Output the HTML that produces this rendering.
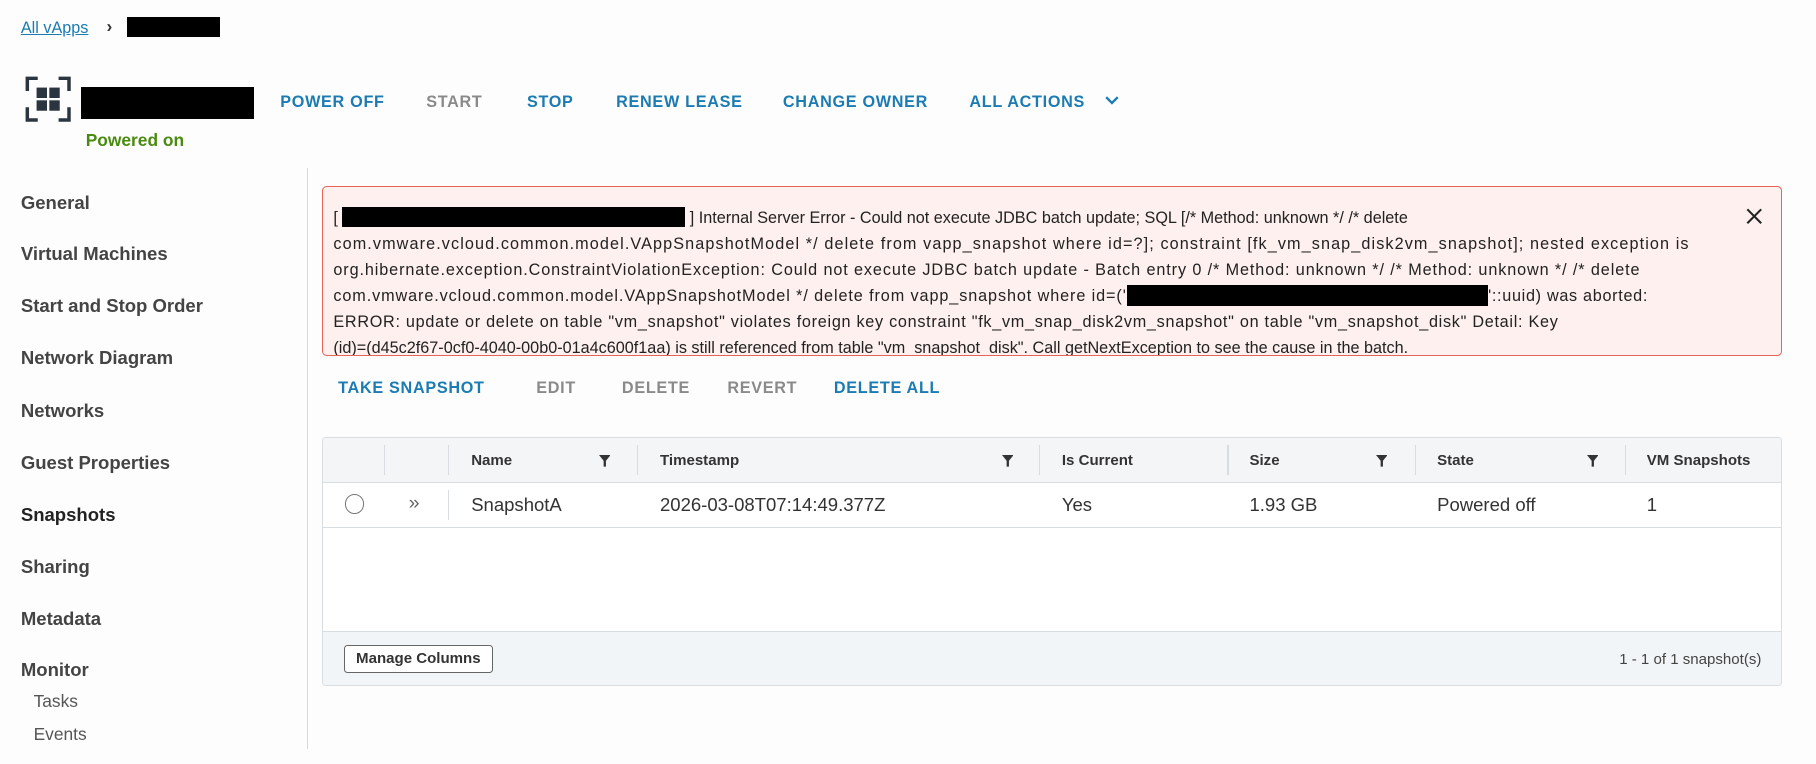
<!DOCTYPE html>
<html><head><meta charset="utf-8"><style>
html,body{margin:0;padding:0;width:1816px;height:764px;overflow:hidden;background:#fff;}
#w{zoom:1.15816;width:1568px;height:660px;position:relative;font-family:"Liberation Sans",sans-serif;color:#333;background:#fdfdfd;}
.a{position:absolute;white-space:nowrap;}
.act{font-size:14px;font-weight:bold;letter-spacing:.6px;color:#1b7bb2;top:80px;}
.g{color:#8a8a8a;}
.nav{left:18px;font-size:16px;font-weight:bold;color:#444;}
.sub{font-size:15px;color:#555;left:29px;}
.err{left:278px;top:161px;width:1259px;height:145px;background:#fdf0ee;border:1px solid #e66457;border-radius:4px;overflow:hidden;}
.err p{margin:0;position:absolute;left:9px;top:15px;font-size:14px;line-height:22.5px;color:#222;white-space:nowrap;}
.blk{display:inline-block;background:#000;height:18px;vertical-align:-4px;}
.b2{font-size:14px;font-weight:bold;letter-spacing:.6px;top:327px;}
.tbl{left:278px;top:377px;width:1259px;height:214px;border:1px solid #d7dde1;border-radius:3px;background:#fff;overflow:hidden;}
.hd{position:absolute;left:0;top:0;width:100%;height:38px;background:#f3f5f7;border-bottom:1px solid #d7dde1;}
.th{top:12px;font-size:13px;font-weight:bold;color:#333;}
.sep{position:absolute;width:1px;background:#d7dde1;}
.td{top:49px;font-size:16px;color:#333;}
.ft{position:absolute;left:0;top:167px;width:100%;height:47px;background:#f2f5f7;border-top:1px solid #d7dde1;}
</style></head><body><div id="w">
<div class="a" style="left:18px;top:16px;font-size:14px;color:#1b7bb2;text-decoration:underline;">All vApps</div>
<div class="a" style="left:92px;top:14px;font-size:15px;color:#333;font-weight:bold;">›</div>
<div class="a" style="left:110px;top:15px;width:80px;height:17px;background:#000;"></div>
<svg class="a" style="left:22px;top:66px" width="40" height="40" viewBox="0 0 40 40" fill="none" stroke="#2b3540" stroke-width="3">
<path d="M2 13V2h9M29 2h9v11M38 27v11h-9M11 38H2V27"/>
<g fill="#2b3540" stroke="none"><rect x="10" y="10" width="9" height="9"/><rect x="21" y="10" width="9" height="9"/><rect x="10" y="21" width="9" height="9"/><rect x="21" y="21" width="9" height="9"/></g></svg>
<div class="a" style="left:70px;top:75px;width:149px;height:28px;background:#000;"></div>
<div class="a act" style="left:242px">POWER OFF</div>
<div class="a act g" style="left:368px">START</div>
<div class="a act" style="left:455px">STOP</div>
<div class="a act" style="left:532px">RENEW LEASE</div>
<div class="a act" style="left:676px">CHANGE OWNER</div>
<div class="a act" style="left:837px">ALL ACTIONS</div>
<svg class="a" style="left:954px;top:83px" width="12" height="8" viewBox="0 0 12 8"><path d="M1 1l5 5 5-5" stroke="#1b7bb2" stroke-width="2" fill="none"/></svg>
<div class="a" style="left:74px;top:112px;font-size:15px;font-weight:bold;color:#4a8a10;">Powered on</div>
<div class="a" style="left:265px;top:145px;width:1px;height:502px;background:#d8d8d8;"></div>
<div class="a nav" style="top:166px">General</div>
<div class="a nav" style="top:210px">Virtual Machines</div>
<div class="a nav" style="top:255px">Start and Stop Order</div>
<div class="a nav" style="top:300px">Network Diagram</div>
<div class="a nav" style="top:345px">Networks</div>
<div class="a nav" style="top:390px">Guest Properties</div>
<div class="a nav" style="top:435px;color:#222">Snapshots</div>
<div class="a nav" style="top:480px">Sharing</div>
<div class="a nav" style="top:525px">Metadata</div>
<div class="a nav" style="top:569px">Monitor</div>
<div class="a sub" style="top:597px">Tasks</div>
<div class="a sub" style="top:625px">Events</div>
<div class="a err"><p>[ <span class="blk" style="width:296px"></span> ] Internal Server Error - Could not execute JDBC batch update; SQL [/* Method: unknown */ /* delete<br><span style="letter-spacing:.95px">com.vmware.vcloud.common.model.VAppSnapshotModel */ delete from vapp_snapshot where id=?]; constraint [fk_vm_snap_disk2vm_snapshot]; nested exception is</span><br><span style="letter-spacing:.77px">org.hibernate.exception.ConstraintViolationException: Could not execute JDBC batch update - Batch entry 0 /* Method: unknown */ /* Method: unknown */ /* delete</span><br><span style="letter-spacing:.78px">com.vmware.vcloud.common.model.VAppSnapshotModel */ delete from vapp_snapshot where id=('</span><span class="blk" style="width:312px"></span><span style="letter-spacing:.6px">'::uuid) was aborted:</span><br><span style="letter-spacing:.62px">ERROR: update or delete on table "vm_snapshot" violates foreign key constraint "fk_vm_snap_disk2vm_snapshot" on table "vm_snapshot_disk" Detail: Key</span><br>(id)=(d45c2f67-0cf0-4040-00b0-01a4c600f1aa) is still referenced from table "vm_snapshot_disk". Call getNextException to see the cause in the batch.</p>
<svg style="position:absolute;left:1228px;top:17px" width="16" height="16" viewBox="0 0 16 16"><path d="M2 2l12 12M14 2L2 14" stroke="#222" stroke-width="1.8"/></svg></div>
<div class="a b2" style="left:292px;color:#1b7bb2">TAKE SNAPSHOT</div>
<div class="a b2 g" style="left:463px">EDIT</div>
<div class="a b2 g" style="left:537px">DELETE</div>
<div class="a b2 g" style="left:628px">REVERT</div>
<div class="a b2" style="left:720px;color:#1b7bb2">DELETE ALL</div>
<div class="a tbl">
<div class="hd"></div>
<div class="sep" style="left:53px;top:6px;height:26px"></div>
<div class="sep" style="left:108px;top:6px;height:26px"></div>
<div class="sep" style="left:271px;top:6px;height:26px"></div>
<div class="sep" style="left:618px;top:6px;height:26px"></div>
<div class="sep" style="left:781px;top:6px;height:26px"></div>
<div class="sep" style="left:943px;top:6px;height:26px"></div>
<div class="sep" style="left:1124px;top:6px;height:26px"></div>
<div class="sep" style="left:108px;top:45px;height:26px"></div>
<div class="a th" style="left:128px">Name</div>
<div class="a th" style="left:291px">Timestamp</div>
<div class="a th" style="left:638px">Is Current</div>
<div class="a th" style="left:800px">Size</div>
<div class="a th" style="left:962px">State</div>
<div class="a th" style="left:1143px">VM Snapshots</div>
<svg class="a" style="left:238px;top:15px" width="10" height="10" viewBox="0 0 10 10"><path d="M0 0h10L6 5v5H4V5z" fill="#333"/></svg>
<svg class="a" style="left:586px;top:15px" width="10" height="10" viewBox="0 0 10 10"><path d="M0 0h10L6 5v5H4V5z" fill="#333"/></svg>
<svg class="a" style="left:909px;top:15px" width="10" height="10" viewBox="0 0 10 10"><path d="M0 0h10L6 5v5H4V5z" fill="#333"/></svg>
<svg class="a" style="left:1091px;top:15px" width="10" height="10" viewBox="0 0 10 10"><path d="M0 0h10L6 5v5H4V5z" fill="#333"/></svg>
<div class="a" style="left:19px;top:49px;width:15px;height:15px;border:1.5px solid #777;border-radius:50%;"></div>
<div class="a td" style="left:74px;top:47px;color:#666;font-size:17px">»</div>
<div class="a td" style="left:128px">SnapshotA</div>
<div class="a td" style="left:291px">2026-03-08T07:14:49.377Z</div>
<div class="a td" style="left:638px">Yes</div>
<div class="a td" style="left:800px">1.93 GB</div>
<div class="a td" style="left:962px">Powered off</div>
<div class="a td" style="left:1143px">1</div>
<div class="a" style="left:0;top:77px;width:100%;height:1px;background:#d7dde1"></div>
<div class="ft">
<div class="a" style="left:18px;top:11px;width:127px;height:23px;border:1px solid #666;border-radius:3px;background:#fff;font-size:13px;font-weight:bold;line-height:23px;text-align:center;color:#333;">Manage Columns</div>
<div class="a" style="right:17px;top:16px;font-size:13px;color:#444;">1 - 1 of 1 snapshot(s)</div>
</div></div>
</div></body></html>
